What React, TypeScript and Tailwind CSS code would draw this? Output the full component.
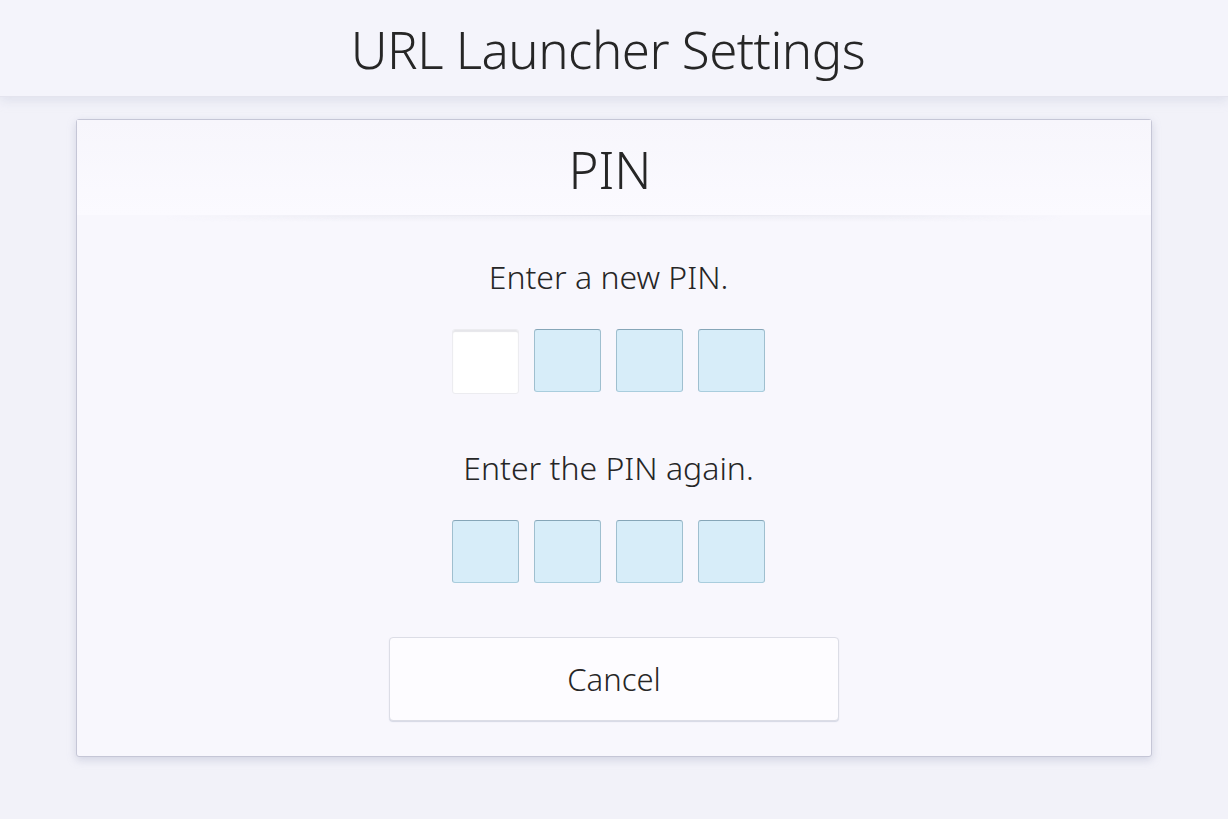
import React from 'react';

const font = { fontFamily: '"Noto Sans", "Open Sans", sans-serif' };

function PinRow({ active }: { active?: number }) {
  return (
    <div className="flex gap-[15px] justify-center">
      {[0, 1, 2, 3].map((i) =>
        i === active ? (
          <div key={i} className="w-[67px] h-[65px] bg-white rounded-[3px] border border-[#ececf0] shadow-[inset_0_2px_1px_#e6e6ea]" />
        ) : (
          <div key={i} className="w-[67px] h-[63px] bg-[#d7edf9] rounded-[3px] border border-[#9fbfcf] border-t-[#86a6b8] border-b-[#a9cddd]" />
        )
      )}
    </div>
  );
}

export default function App() {
  return (
    <div className="w-[1228px] h-[819px] bg-[#f2f2f9] text-[#262626] flex flex-col overflow-hidden" style={font}>
      <div className="h-[97px] bg-[#f4f4fb] border-b border-[#e4e4ee] shadow-[0_4px_10px_rgba(190,195,215,0.35)] flex items-center justify-center pr-[12px]">
        <h1 className="text-[51px] font-light tracking-[-0.5px] leading-none mt-[2px]">URL Launcher Settings</h1>
      </div>
      <div className="mt-[22px] mx-[76px] w-[1076px] h-[638px] bg-[#f8f7fd] border border-[#c5c6d6] rounded-[3px] shadow-[0_3px_8px_rgba(150,155,185,0.35)] flex flex-col items-center">
        <div className="w-full h-[95px] bg-gradient-to-b from-[#f7f6fc] to-[#fbfaff] flex items-center justify-center pr-[8px]">
          <span className="text-[51px] font-light leading-none mt-[4px]">PIN</span>
        </div>
        <div className="w-[900px] h-px bg-gradient-to-r from-transparent via-[#e3e3ec] to-transparent" />
        <div className="w-[900px] h-[6px] bg-gradient-to-b from-[#eeeef5] to-transparent [mask-image:linear-gradient(to_right,transparent,black_20%,black_80%,transparent)]" />
        <div className="flex flex-col items-center pr-[11px]">
          <div className="text-[32px] font-light leading-none mt-[39px]">Enter a new PIN.</div>
          <div className="mt-[36px]">
            <PinRow active={0} />
          </div>
          <div className="text-[32px] font-light leading-none mt-[58px]">Enter the PIN again.</div>
          <div className="mt-[36px]">
            <PinRow />
          </div>
        </div>
        <button className="mt-[54px] w-[450px] h-[84px] bg-[#fdfcff] border border-[#dcdde6] rounded-[4px] shadow-[0_1px_1px_rgba(180,185,205,0.5)] text-[31px] font-light flex items-center justify-center">
          Cancel
        </button>
      </div>
    </div>
  );
}
